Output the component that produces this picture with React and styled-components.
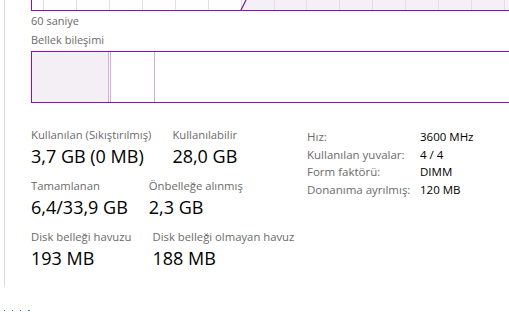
import React from 'react'
import styled, { createGlobalStyle } from 'styled-components'

const GlobalStyle = createGlobalStyle`
  html, body {
    margin: 0;
    padding: 0;
    background: #fff;
  }
  body {
    font-family: "Open Sans", "Noto Sans", sans-serif;
    overflow: hidden;
  }
`

const purple = '#8b12ae'

const stats = [
    [
        { label: 'Kullanılan (Sıkıştırılmış)', value: '3,7 GB (0 MB)' },
        { label: 'Kullanılabilir', value: '28,0 GB' }
    ],
    [
        { label: 'Tamamlanan', value: '6,4/33,9 GB' },
        { label: 'Önbelleğe alınmış', value: '2,3 GB' }
    ],
    [
        { label: 'Disk belleği havuzu', value: '193 MB' },
        { label: 'Disk belleği olmayan havuz', value: '188 MB' }
    ]
]

const specs = [
    { label: 'Hız:', value: '3600 MHz' },
    { label: 'Kullanılan yuvalar:', value: '4 / 4' },
    { label: 'Form faktörü:', value: 'DIMM' },
    { label: 'Donanıma ayrılmış:', value: '120 MB' }
]

const gridXs = Array.from({ length: 15 }, (_, i) => 11 + i * 32.93)

function App() {
    return (
        <Page>
            <GlobalStyle />
            <Main>
                <Divider />
                <Content>
                    <Chart>
                        <svg width="500" height="10">
                            <polygon points="209,10 214,0 500,0 500,10" fill="#f4f0f5" />
                            {gridXs.map((x) => (
                                <line key={x} x1={Math.round(x) + 0.5} x2={Math.round(x) + 0.5} y1="0" y2="10" stroke="#ead8ef" />
                            ))}
                            <line x1="209" y1="10" x2="214" y2="0" stroke={purple} strokeWidth="1.2" />
                        </svg>
                    </Chart>
                    <Caption>60 saniye</Caption>
                    <Caption $gap>Bellek bileşimi</Caption>
                    <Composition>
                        <Segment $w={76} $fill />
                        <Segment $w={1} />
                        <Segment $w={43} />
                        <Segment $free />
                    </Composition>
                    <Details>
                        <Stats>
                            {stats.map((row, i) => (
                                <StatRow key={i}>
                                    {row.map(({ label, value }) => (
                                        <Stat key={label}>
                                            <StatLabel>{label}</StatLabel>
                                            <StatValue>{value}</StatValue>
                                        </Stat>
                                    ))}
                                </StatRow>
                            ))}
                        </Stats>
                        <Specs>
                            {specs.map(({ label, value }) => (
                                <React.Fragment key={label}>
                                    <SpecLabel>{label}</SpecLabel>
                                    <SpecValue>{value}</SpecValue>
                                </React.Fragment>
                            ))}
                        </Specs>
                    </Details>
                </Content>
            </Main>
            <Footer>
                <Dot />
                <Dot />
                <Dot />
                <Dot $wide />
            </Footer>
        </Page>
    )
}

export default App

const Page = styled.div`
    width: 509px;
    height: 312px;
    display: flex;
    flex-direction: column;
    overflow: hidden;
`

const Main = styled.div`
    display: flex;
    height: 287px;
    padding-left: 4px;
`

const Divider = styled.div`
    width: 1px;
    background: #dadada;
    flex: none;
`

const Content = styled.div`
    flex: 1;
    min-width: 0;
    margin-left: 26px;
    display: flex;
    flex-direction: column;
`

const Chart = styled.div`
    width: 520px;
    height: 10px;
    border-left: 1px solid ${purple};
    border-bottom: 1px solid ${purple};
    svg {
        display: block;
    }
`

const Caption = styled.div`
    font-size: 11px;
    line-height: 15px;
    color: #6b6b6b;
    margin-top: ${(p) => (p.$gap ? '4px' : '2px')};
`

const Composition = styled.div`
    width: 520px;
    height: 50px;
    margin-top: 4px;
    border: 1px solid ${purple};
    display: flex;
`

const Segment = styled.div`
    flex: ${(p) => (p.$free ? '1' : `0 0 ${p.$w}px`)};
    background: ${(p) => (p.$fill ? '#f3eff4' : 'transparent')};
    border-right: ${(p) => (p.$free ? 'none' : '1px solid #d4a9dc')};
`

const Details = styled.div`
    display: flex;
    margin-top: 24px;
`

const Stats = styled.div`
    display: flex;
    flex-direction: column;
    gap: 9px;
    flex: 0 0 276px;
    white-space: nowrap;
`

const StatRow = styled.div`
    display: flex;
    gap: 21px;
`

const Stat = styled.div`
    display: flex;
    flex-direction: column;
`

const StatLabel = styled.div`
    font-size: 11.3px;
    line-height: 16px;
    color: #6b6b6b;
`

const StatValue = styled.div`
    font-size: 18px;
    line-height: 25px;
    margin-top: 1px;
    color: #000;
`

const Specs = styled.div`
    display: grid;
    grid-template-columns: 113px auto;
    grid-auto-rows: 17.5px;
    align-content: start;
    margin-top: 1px;
    white-space: nowrap;
`

const SpecLabel = styled.div`
    font-size: 11.5px;
    line-height: 17.5px;
    color: #6b6b6b;
`

const SpecValue = styled.div`
    font-size: 11.5px;
    line-height: 17.5px;
    color: #000;
`

const Footer = styled.div`
    display: flex;
    align-items: flex-end;
    flex: 1;
    padding-left: 4px;
    gap: 7px;
`

const Dot = styled.span`
    width: ${(p) => (p.$wide ? '2px' : '1px')};
    height: 1px;
    margin-bottom: 1px;
    background: #3d82f5;
`
